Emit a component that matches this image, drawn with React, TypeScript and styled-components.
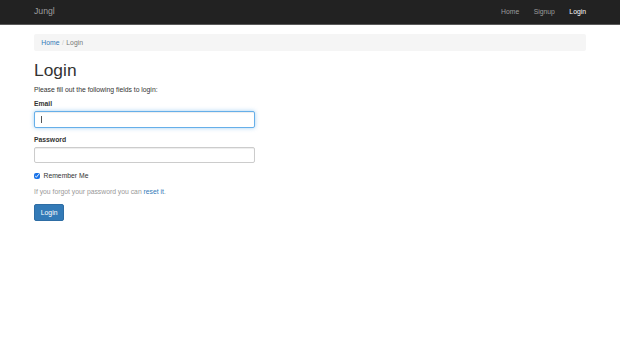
import * as React from "react";
import styled, { createGlobalStyle } from "styled-components";

const GlobalStyle = createGlobalStyle`
  html, body {
    margin: 0;
    padding: 0;
    background: #fff;
  }
  body {
    font-family: "Liberation Sans", Arial, sans-serif;
    font-size: 6.8px;
    line-height: 9.7px;
    color: #333;
  }
  * {
    box-sizing: border-box;
  }
`;

const Navbar = styled.nav`
  height: 25px;
  background: #222;
  border-bottom: 1px solid #5a5a5a;
`;

const NavInner = styled.div`
  width: 552px;
  height: 24px;
  margin: 0 auto;
  display: flex;
  align-items: center;
  justify-content: space-between;
`;

const Brand = styled.a`
  color: #9d9d9d;
  font-size: 8.7px;
  text-decoration: none;
`;

const NavLinks = styled.ul`
  display: flex;
  list-style: none;
  margin: 0;
  padding: 0;
  gap: 14.5px;
`;

const NavLink = styled.a<{ $active?: boolean }>`
  color: ${(p) => (p.$active ? "#fff" : "#9d9d9d")};
  text-decoration: none;
`;

const Container = styled.div`
  width: 552px;
  margin: 0 auto;
  padding-top: 8.5px;
`;

const Breadcrumb = styled.ol`
  display: flex;
  list-style: none;
  margin: 0 0 9.7px;
  padding: 4px 7.3px;
  background: #f5f5f5;
  border-radius: 2px;
  li + li::before {
    content: "/";
    color: #ccc;
    padding: 0 2.5px;
  }
`;

const Crumb = styled.li<{ $active?: boolean }>`
  color: ${(p) => (p.$active ? "#777" : "#337ab7")};
`;

const Title = styled.h1`
  font-size: 17.4px;
  line-height: 19.2px;
  font-weight: 500;
  margin: 1px 0 4.8px;
  color: #333;
`;

const Intro = styled.p`
  margin: 0 0 4.8px;
`;

const Form = styled.form`
  width: 221px;
`;

const FormGroup = styled.div`
  margin-bottom: 7.3px;
`;

const Label = styled.label`
  display: block;
  font-weight: bold;
  margin-bottom: 2.2px;
`;

const InputWrap = styled.div`
  position: relative;
`;

const Input = styled.input<{ $focused?: boolean }>`
  display: block;
  width: 100%;
  height: 16.5px;
  padding: 2.9px 5.8px;
  font: inherit;
  border: 1px solid ${(p) => (p.$focused ? "#66afe9" : "#ccc")};
  border-radius: 2px;
  box-shadow: ${(p) =>
    p.$focused
      ? "inset 0 1px 1px rgba(0,0,0,.075), 0 0 4px rgba(102,175,233,.6)"
      : "inset 0 1px 1px rgba(0,0,0,.075)"};
  outline: none;
  background: #fff;
`;

const Caret = styled.span`
  position: absolute;
  left: 6.5px;
  top: 4.5px;
  width: 1px;
  height: 7.5px;
  background: #555;
`;

const CheckRow = styled.label`
  display: flex;
  align-items: center;
  gap: 3.5px;
  margin: 6.3px 0 0;
  color: #333;
`;

const Check = styled.input`
  width: 6px;
  height: 6px;
  margin: 0;
  accent-color: #1a73e8;
`;

const Hint = styled.div`
  color: #999;
  margin: 6.3px 0 3px;
  a {
    color: #337ab7;
    text-decoration: none;
  }
`;

const Button = styled.button`
  margin-top: 5px;
  font: inherit;
  color: #fff;
  background: #337ab7;
  border: 1px solid #2e6da4;
  border-radius: 2px;
  padding: 2.4px 5.8px;
  line-height: 9.7px;
`;

export default function App() {
  return (
    <>
      <GlobalStyle />
      <Navbar>
        <NavInner>
          <Brand href="#">Jungl</Brand>
          <NavLinks>
            <li><NavLink href="#">Home</NavLink></li>
            <li><NavLink href="#">Signup</NavLink></li>
            <li><NavLink href="#" $active>Login</NavLink></li>
          </NavLinks>
        </NavInner>
      </Navbar>
      <Container>
        <Breadcrumb>
          <Crumb>Home</Crumb>
          <Crumb $active>Login</Crumb>
        </Breadcrumb>
        <Title>Login</Title>
        <Intro>Please fill out the following fields to login:</Intro>
        <Form onSubmit={(e) => e.preventDefault()}>
          <FormGroup>
            <Label>Email</Label>
            <InputWrap>
              <Input type="text" $focused />
              <Caret />
            </InputWrap>
          </FormGroup>
          <FormGroup>
            <Label>Password</Label>
            <Input type="password" />
          </FormGroup>
          <CheckRow>
            <Check type="checkbox" defaultChecked />
            Remember Me
          </CheckRow>
          <Hint>
            If you forgot your password you can <a href="#">reset it</a>.
          </Hint>
          <Button type="submit">Login</Button>
        </Form>
      </Container>
    </>
  );
}
